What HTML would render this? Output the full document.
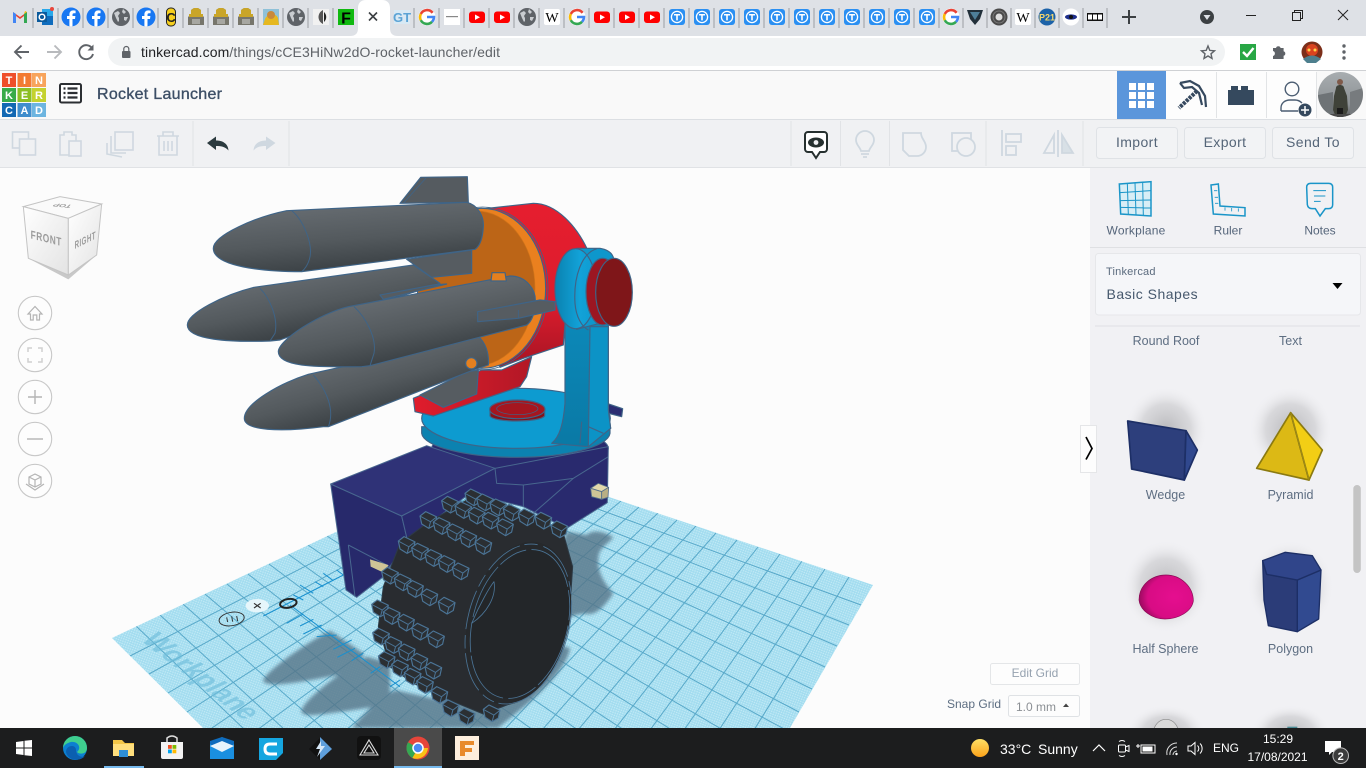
<!DOCTYPE html>
<html lang="en">
<head>
<meta charset="utf-8">
<title>Rocket Launcher</title>
<style>
html,body{margin:0;padding:0;width:1366px;height:768px;overflow:hidden;background:#fcfcfc}
svg{display:block;font-family:"Liberation Sans",Arial,sans-serif}
</style>
</head>
<body>
<svg xmlns="http://www.w3.org/2000/svg" width="1366" height="768" viewBox="0 0 1366 768">
<defs>
<filter id="soft" x="-10%" y="-10%" width="120%" height="120%"><feGaussianBlur stdDeviation="1.8"/></filter>
<pattern id="dots" width="2.4" height="2.4" patternUnits="userSpaceOnUse" patternTransform="rotate(20)"><rect width="2.4" height="2.4" fill="#a2dcef"/><circle cx="1.2" cy="1.2" r=".75" fill="#c4ebf7"/></pattern>
<clipPath id="wpclip"><polygon points="492,458 873,585 790,728 203,728 112,638"/></clipPath>
<linearGradient id="rk1" gradientUnits="userSpaceOnUse" x1="492" y1="110" x2="508" y2="290"><stop offset="0" stop-color="#646a6f"/><stop offset=".55" stop-color="#53595d"/><stop offset="1" stop-color="#3d4347"/></linearGradient>
<linearGradient id="rk2" gradientUnits="userSpaceOnUse" x1="384" y1="312" x2="416" y2="478"><stop offset="0" stop-color="#646a6f"/><stop offset=".55" stop-color="#53595d"/><stop offset="1" stop-color="#3d4347"/></linearGradient>
<linearGradient id="rk3" gradientUnits="userSpaceOnUse" x1="662" y1="382" x2="698" y2="558"><stop offset="0" stop-color="#646a6f"/><stop offset=".55" stop-color="#53595d"/><stop offset="1" stop-color="#3d4347"/></linearGradient>
<linearGradient id="rk4" gradientUnits="userSpaceOnUse" x1="536" y1="554" x2="584" y2="726"><stop offset="0" stop-color="#646a6f"/><stop offset=".55" stop-color="#53595d"/><stop offset="1" stop-color="#3d4347"/></linearGradient>
<linearGradient id="red" x1="0" y1="0" x2="0" y2="1"><stop offset="0" stop-color="#e61e2f"/><stop offset=".6" stop-color="#dc1c2d"/><stop offset="1" stop-color="#a71524"/></linearGradient>
<linearGradient id="redb" x1="0" y1="0" x2="1" y2="0"><stop offset="0" stop-color="#e01c2c"/><stop offset="1" stop-color="#b21826"/></linearGradient>
<linearGradient id="hub" x1="0" y1="0" x2="1" y2="0"><stop offset="0" stop-color="#0a82b0"/><stop offset=".6" stop-color="#12a2d8"/><stop offset="1" stop-color="#0e9ad0"/></linearGradient>
<linearGradient id="arm" x1="0" y1="0" x2="0" y2="1"><stop offset="0" stop-color="#0c88b8"/><stop offset="1" stop-color="#0a79a5"/></linearGradient>
<linearGradient id="cubeL" x1="0" y1="0" x2="1" y2="1"><stop offset="0" stop-color="#fff"/><stop offset="1" stop-color="#e3e3e3"/></linearGradient>
<radialGradient id="blurshadow"><stop offset="0" stop-color="#b2b2b5" stop-opacity=".9"/><stop offset=".6" stop-color="#c4c4c7" stop-opacity=".55"/><stop offset="1" stop-color="#f1f1f4" stop-opacity="0"/></radialGradient>
<radialGradient id="pink" cx=".65" cy=".5" r=".7"><stop offset="0" stop-color="#e50e8f"/><stop offset=".7" stop-color="#d80c84"/><stop offset="1" stop-color="#8a0a55"/></radialGradient>
<linearGradient id="sun" x1="0" y1="0" x2="0" y2="1"><stop offset="0" stop-color="#ffe066"/><stop offset="1" stop-color="#fba21a"/></linearGradient>
<linearGradient id="sky" x1="0" y1="0" x2="0" y2="1"><stop offset="0" stop-color="#a8adb0"/><stop offset=".7" stop-color="#8d9295"/><stop offset="1" stop-color="#585a5c"/></linearGradient>
<clipPath id="avclip"><circle cx="1340.5" cy="94.5" r="22.5"/></clipPath>
<clipPath id="fbclip"><circle cx="0" cy="0" r="9.5"/></clipPath>
<g id="fb"><circle r="9.5" fill="#1877f2"/><path clip-path="url(#fbclip)" fill="#fff" d="M1.5,10V2H4l.4-3H1.5V-2.2c0-.9.4-1.5,1.6-1.5H4.6V-6.4C4-6.5,3.2-6.6,2.4-6.6-.2-6.6-1.6-5-1.6-2.5V-1H-4V2h2.4v8Z"/></g>
<g id="globe"><circle r="9" fill="#5f6368"/><path fill="#c9ccd0" d="M-7,-4 L-3,-6 L-1,-4 L-3,-1 L-2,1 L-2,4 L-3,5 L-5,1 Z M2,-8 L5,-5 L3,-3 L1,-5 Z M3,0 L7,0 L5,4 L3,3 Z"/></g>
<g id="yt"><rect x="-8" y="-5.5" width="16" height="11.5" rx="3" fill="#f00"/><path d="M-2,-2.5 L3,.2 L-2,3Z" fill="#fff"/></g>
<g id="tt"><rect x="-8" y="-8" width="16" height="16" rx="3" fill="#2a8ff2"/><circle r="5.6" fill="none" stroke="#fff" stroke-width="1.3"/><path d="M-3,-3H3V-1.5H.8V3.4H-.8V-1.5H-3Z" fill="#fff"/></g>
<g id="gg"><circle r="8.5" fill="#fff"/><path d="M5.6,-4.2A7,7 0 0 0 -6.2,-3" fill="none" stroke="#ea4335" stroke-width="2.6"/><path d="M-6.2,-3A7,7 0 0 0 -6.2,3.2" fill="none" stroke="#fbbc05" stroke-width="2.6"/><path d="M-6.2,3.2A7,7 0 0 0 5,4.8" fill="none" stroke="#34a853" stroke-width="2.6"/><path d="M5,4.8A7,7 0 0 0 7,0H0" fill="none" stroke="#4285f4" stroke-width="2.6"/></g>
<g id="rob"><path d="M-8,8 V0 L-5,-3 V-7 L-2,-9 H2 L5,-7 V-3 L8,0 V8Z" fill="#77766c"/><path d="M-5,-3 V-7 L-2,-9 H2 L5,-7 V-3Z" fill="#c9a528"/><rect x="-7" y="-3" width="14" height="3" fill="#c9a528"/><rect x="-4" y="2" width="8" height="5" fill="#a7a7a1"/></g>
<g id="wk"><rect x="-8" y="-8" width="16" height="16" rx="2" fill="#fff"/><text x="0" y="5" font-family="'Liberation Serif',serif" font-size="14" text-anchor="middle" fill="#000">W</text></g>
<g id="lug" transform="scale(1.32)"><path d="M-19,-9 L-6,-19 L19,-7 L15,11 L1,19 L-15,9Z" fill="#2b2f33" stroke="#4b7496" stroke-width="2.6" stroke-linejoin="round"/><path d="M-19,-9 L5,4 L19,-7 M5,4 L1,19" fill="none" stroke="#4b7496" stroke-width="2.2"/></g>
</defs>

<!-- backgrounds -->
<rect width="1366" height="768" fill="#fcfcfc"/>
<rect width="1366" height="36" fill="#dee1e6"/>
<rect y="36" width="1366" height="34" fill="#fff"/>
<rect y="70" width="1366" height="1" fill="#cfd1d4"/>
<rect y="71" width="1366" height="48" fill="#f9f9f9"/>
<rect y="119" width="1366" height="1.5" fill="#dcdfe3"/>
<rect y="120" width="1366" height="47" fill="#f0f1f3"/>
<rect y="167" width="1366" height="1" fill="#e0e2e5"/>

<!-- active tab -->
<path d="M350,36 C356,36 358,33 358,28 V8 C358,3 361,0 366,0 H382 C387,0 390,3 390,8 V28 C390,33 392,36 398,36Z" fill="#fff"/>
<path d="M369,12.5 L377,20.5 M377,12.5 L369,20.5" stroke="#3c4043" stroke-width="1.6"/>

<!-- tab separators -->
<g stroke="#9a9da1" stroke-width="1">
<path d="M33,8V28M58,8V28M83,8V28M108,8V28M133,8V28M158,8V28M183,8V28M208,8V28M233,8V28M258,8V28M283,8V28M308,8V28M333,8V28M414,8V28M439,8V28M464,8V28M489,8V28M514,8V28M539,8V28M564,8V28M589,8V28M614,8V28M639,8V28M664,8V28M689,8V28M714,8V28M739,8V28M764,8V28M789,8V28M814,8V28M839,8V28M864,8V28M889,8V28M914,8V28M939,8V28M963,8V28M987,8V28M1011,8V28M1035,8V28M1059,8V28M1083,8V28M1107,8V28"/>
</g>

<!-- favicons -->
<g>
<g transform="translate(20,17)"><path d="M-7,6V-5L0,0L7,-5V6H4V-1L0,2L-4,-1V6Z" fill="#ea4335"/><path d="M-7,6V-5L-4,-3V6Z" fill="#4285f4"/><path d="M7,6V-5L4,-3V6Z" fill="#34a853"/><path d="M4,-3L7,-5L5,-6Z" fill="#fbbc05"/></g>
<g transform="translate(45,17)"><rect x="-3" y="-8" width="11" height="16" fill="#28a8ea"/><rect x="-3" y="-1" width="11" height="9" fill="#0f6cbd"/><rect x="-8" y="-5" width="10" height="10" fill="#0a5a9c"/><circle cx="-3" cy="0" r="2.8" fill="none" stroke="#fff" stroke-width="1.5"/><circle cx="7" cy="-8" r="2" fill="#e8463c"/></g>
<use href="#fb" x="71" y="17"/><use href="#fb" x="96" y="17"/>
<use href="#globe" x="121" y="17"/><use href="#fb" x="146" y="17"/>
<g transform="translate(171,17)"><rect x="-4.5" y="-9" width="9" height="18" rx="4" fill="#f6cf1d" stroke="#222" stroke-width="1"/><text x="0" y="5" font-size="13" font-weight="bold" text-anchor="middle" fill="#222">C</text></g>
<use href="#rob" x="196" y="17"/><use href="#rob" x="221" y="17"/><use href="#rob" x="246" y="17"/>
<g transform="translate(271,17)"><rect x="-8" y="-8" width="16" height="16" fill="#8fc1d8"/><path d="M-8,8 L-6,2 C-4,-3 4,-5 7,1 L8,8Z" fill="#e6b820"/><circle cx="0" cy="-2" r="4" fill="#c98a3c"/></g>
<use href="#globe" x="296" y="17"/>
<g transform="translate(321,17)"><rect x="-8" y="-8" width="16" height="16" fill="#f1f1f1"/><path d="M2,-7 C-4,-4 -4,4 2,7 Z" fill="#555"/><path d="M3,-5 C6,-2 6,2 3,5Z" fill="#222"/></g>
<g transform="translate(346,17)"><rect x="-8" y="-8" width="16" height="16" fill="#10b910"/><text x="0" y="6.5" font-size="16" font-weight="bold" text-anchor="middle" fill="#000">F</text></g>
<g transform="translate(402,17)"><rect x="-8" y="-7" width="16" height="14" fill="#d8e9f4"/><text x="0" y="5" font-size="13" font-weight="bold" text-anchor="middle" fill="#5ba3d5">GT</text></g>
<use href="#gg" x="427" y="17"/>
<g transform="translate(452,17)"><rect x="-8" y="-8" width="16" height="16" fill="#fff"/><rect x="-6" y="-1" width="12" height="1.2" fill="#888"/></g>
<use href="#yt" x="477" y="17"/><use href="#yt" x="502" y="17"/>
<use href="#globe" x="527" y="17"/><use href="#wk" x="552" y="17"/>
<use href="#gg" x="577" y="17"/><use href="#yt" x="602" y="17"/><use href="#yt" x="627" y="17"/><use href="#yt" x="652" y="17"/>
<use href="#tt" x="677" y="17"/><use href="#tt" x="702" y="17"/><use href="#tt" x="727" y="17"/><use href="#tt" x="752" y="17"/><use href="#tt" x="777" y="17"/><use href="#tt" x="802" y="17"/><use href="#tt" x="827" y="17"/><use href="#tt" x="852" y="17"/><use href="#tt" x="877" y="17"/><use href="#tt" x="902" y="17"/><use href="#tt" x="927" y="17"/>
<use href="#gg" x="951" y="17"/>
<g transform="translate(975,17)"><path d="M-8,-7 H8 L5,2 L0,8 L-5,2Z" fill="#22303a"/><path d="M-5,-5 H5 L0,3Z" fill="#4e7f99"/></g>
<g transform="translate(999,17)"><circle r="8.5" fill="#4a4a4a"/><circle r="3.5" fill="#ddd"/><circle r="6" fill="none" stroke="#777" stroke-width="1"/></g>
<use href="#wk" x="1023" y="17"/>
<g transform="translate(1047,17)"><circle r="8.5" fill="#1c62a8"/><text x="0" y="3.5" font-size="9" font-weight="bold" text-anchor="middle" fill="#f5d66b">P21</text></g>
<g transform="translate(1071,17)"><circle r="8.5" fill="#fff"/><ellipse rx="6" ry="2.6" fill="#1e2f8c"/><circle r="2" fill="#111"/></g>
<g transform="translate(1095,17)"><rect x="-8" y="-4" width="16" height="8" fill="#111"/><rect x="-7" y="-2.5" width="4" height="5" fill="#fff"/><rect x="-2" y="-2.5" width="4" height="5" fill="#fff"/><rect x="3" y="-2.5" width="4" height="5" fill="#fff"/></g>
</g>

<!-- window controls -->
<path d="M1122,17 H1136 M1129,10 V24" stroke="#3c4043" stroke-width="2"/>
<circle cx="1207" cy="17" r="7" fill="#3c4043"/><path d="M1203.5,15 H1210.5 L1207,20Z" fill="#dee1e6"/>
<path d="M1246,15.5 H1256" stroke="#222" stroke-width="1"/>
<path d="M1292.5,12.5 h8 v8 h-8Z M1294.5,12.5 v-2 h8 v8 h-2" fill="none" stroke="#222" stroke-width="1"/>
<path d="M1338,10 L1348,20 M1348,10 L1338,20" stroke="#222" stroke-width="1"/>

<!-- nav bar -->
<path d="M29,52 H15 M21.5,45.5 L15,52 L21.5,58.5" fill="none" stroke="#5f6368" stroke-width="1.9"/>
<path d="M47,52 H61 M54.5,45.5 L61,52 L54.5,58.5" fill="none" stroke="#b8babd" stroke-width="1.9"/>
<path d="M92.5,49 A7,7 0 1 0 93,54" fill="none" stroke="#5f6368" stroke-width="1.9"/><path d="M93.5,44.5 V50.5 H87.5Z" fill="#5f6368"/>
<rect x="108" y="38" width="1117" height="28" rx="14" fill="#f1f3f4"/>
<rect x="122" y="51" width="8.5" height="7" rx="1" fill="#5f6368"/><path d="M123.8,51 V49 a2.5,2.5 0 0 1 5,0 V51" fill="none" stroke="#5f6368" stroke-width="1.2"/>
<text x="141" y="57" font-size="14" fill="#5f6368" textLength="359"><tspan fill="#202124">tinkercad.com</tspan>/things/cCE3HiNw2dO-rocket-launcher/edit</text>
<path d="M1208,46 L1209.8,50.4 L1214.5,50.8 L1211,53.8 L1212,58.4 L1208,56 L1204,58.4 L1205,53.8 L1201.5,50.8 L1206.2,50.4Z" fill="none" stroke="#5f6368" stroke-width="1.4"/>
<rect x="1240" y="44" width="16" height="16" fill="#28a745"/><path d="M1243,52 L1247,56 L1253.5,48" fill="none" stroke="#fff" stroke-width="2.4"/>
<path d="M1273,48 h3 a2.4,2.4 0 0 1 4.6,0 h3 v3.2 a2.4,2.4 0 0 1 0,4.6 v3.2 h-10.6 v-3 a2.6,2.6 0 0 0 0,-5Z" fill="#5f6368"/>
<circle cx="1312" cy="52" r="10.5" fill="#7c2f1a"/><circle cx="1312" cy="50" r="6" fill="#d9431f"/><circle cx="1309" cy="50" r="1.5" fill="#ffd24a"/><circle cx="1315" cy="50" r="1.5" fill="#ffd24a"/><path d="M1303,59 Q1312,52 1321,59 L1316,63 H1307Z" fill="#4d7f8e"/>
<circle cx="1344" cy="46" r="1.7" fill="#5f6368"/><circle cx="1344" cy="52" r="1.7" fill="#5f6368"/><circle cx="1344" cy="58" r="1.7" fill="#5f6368"/>

<!-- Tinkercad logo -->
<g font-size="11" font-weight="bold" fill="#fff" text-anchor="middle">
<rect x="2" y="73" width="14" height="14" fill="#ef4f2b"/><text x="9" y="84">T</text>
<rect x="17.5" y="73" width="14" height="14" fill="#f37b33"/><text x="24.5" y="84">I</text>
<rect x="32" y="73" width="14" height="14" fill="#f8a45c"/><text x="39" y="84">N</text>
<rect x="2" y="88" width="14" height="14" fill="#39ab4a"/><text x="9" y="99">K</text>
<rect x="17.5" y="88" width="14" height="14" fill="#8dbf24"/><text x="24.5" y="99">E</text>
<rect x="32" y="88" width="14" height="14" fill="#c4d230"/><text x="39" y="99">R</text>
<rect x="2" y="103" width="14" height="14" fill="#1268b3"/><text x="9" y="114">C</text>
<rect x="17.5" y="103" width="14" height="14" fill="#3f8dcc"/><text x="24.5" y="114">A</text>
<rect x="32" y="103" width="14" height="14" fill="#6db5e0"/><text x="39" y="114">D</text>
</g>
<rect x="60" y="84" width="21" height="18.5" rx="1.5" fill="#fff" stroke="#2c2f33" stroke-width="2"/>
<path d="M63.5,88.5h2M63.5,93h2M63.5,97.5h2M67.5,88.5h10M67.5,93h10M67.5,97.5h10" stroke="#2c2f33" stroke-width="2.2"/>
<text x="97" y="99" font-size="16" fill="#3d4f66" stroke="#3d4f66" stroke-width=".35" textLength="125">Rocket Launcher</text>

<!-- header right -->
<rect x="1117" y="71" width="49" height="48" fill="#5b96db"/>
<g fill="#fff"><rect x="1129" y="83" width="7" height="7"/><rect x="1138" y="83" width="7" height="7"/><rect x="1147" y="83" width="7" height="7"/><rect x="1129" y="92" width="7" height="7"/><rect x="1138" y="92" width="7" height="7"/><rect x="1147" y="92" width="7" height="7"/><rect x="1129" y="101" width="7" height="7"/><rect x="1138" y="101" width="7" height="7"/><rect x="1147" y="101" width="7" height="7"/></g>
<rect x="1166" y="71" width="150" height="48" fill="#fdfdfd"/>
<path d="M1216.5,72V118M1266.5,72V118M1316.5,72V118" stroke="#e2e4e6" stroke-width="1"/>
<path d="M1180,83 L1190,81 L1199,86 L1205,96 L1206,107 M1180,83 L1184,88 L1192,87 L1199,93 L1202,105" fill="none" stroke="#36495f" stroke-width="2.2"/>
<path d="M1197,91 L1179,108" stroke="#36495f" stroke-width="4" stroke-dasharray="3 1"/>
<path d="M1228,90 h3 v-4 h7 v4 h3 v-4 h7 v4 h6 v15 h-26Z" fill="#35495e"/>
<circle cx="1292" cy="89" r="6.8" fill="none" stroke="#4b5d72" stroke-width="1.4"/>
<path d="M1281,111 V108 C1281,103 1285,100 1290,100 H1295 C1298,100 1300,101 1302,103 M1281,111 H1298" fill="none" stroke="#4b5d72" stroke-width="1.4"/>
<circle cx="1305" cy="110" r="6.5" fill="#35495e"/><path d="M1301,110 H1309 M1305,106 V114" stroke="#fff" stroke-width="1.5"/>
<g clip-path="url(#avclip)"><rect x="1318" y="72" width="46" height="46" fill="url(#sky)"/><path d="M1318,95 L1333,92 V117 H1318Z" fill="#6e7376"/><path d="M1350,92 L1363,88 V117 H1350Z" fill="#777b7e"/><path d="M1336,88 C1336,84 1344,84 1344,88 L1347,96 L1348,110 L1345,117 H1336 L1333,110 L1334,96Z" fill="#3f4239"/><circle cx="1340" cy="82" r="3" fill="#7f5a4a"/><rect x="1337" y="108" width="6" height="9" fill="#1b1b1b"/><rect x="1318" y="114" width="46" height="4" fill="#4a4a4a"/></g>

<!-- toolbar left -->
<g fill="none" stroke="#cfd8e0" stroke-width="1.6">
<rect x="12.5" y="132" width="16" height="16"/><rect x="19.5" y="139" width="16" height="16" fill="#f0f1f3"/>
<path d="M60,135 H64 V132 H72 V135 H76 V155 H60Z"/><rect x="69" y="141" width="12" height="15" fill="#f0f1f3"/>
<rect x="115" y="132" width="18" height="18"/><path d="M111,136 V153 H126 M107,143 V154 L122,157" />
<path d="M157,136 H179 M163,136 V132 H173 V136 M159,136 V155 H177 V136 M164,141 V151 M168,141 V151 M172,141 V151"/>
</g>
<path d="M193,121V166M289,121V166M791,121V166M840.5,121V166M889.5,121V166M986,121V166M1083,121V166" stroke="#e1e3e6" stroke-width="1"/>
<path d="M207,143 L216,136.5 V140.5 C222,140.5 228,143 228.5,150.5 C225,146.5 221,146 216,146 V150Z" fill="#2b3a3e"/>
<path d="M275.5,143 L266,136.5 V140.5 C260,140.5 254,143 253.5,150.5 C257,146.5 261,146 266,146 V150Z" fill="#cfd8e0"/>

<!-- toolbar right -->
<path d="M808,132 H824 a3,3 0 0 1 3,3 V149 a3,3 0 0 1 -3,3 H820 L816,158 L812,152 H808 a3,3 0 0 1 -3,-3 V135 a3,3 0 0 1 3,-3Z" fill="#fff" stroke="#26302f" stroke-width="2"/>
<ellipse cx="816" cy="142.5" rx="8" ry="5" fill="#26302f"/><circle cx="816" cy="142.5" r="2.4" fill="#f0f1f3"/>
<g fill="none" stroke="#cfd8e0" stroke-width="1.8">
<path d="M861,151 C860,147 856,145 856,140 A9,9 0 0 1 874,140 C874,145 870,147 869,151Z"/><path d="M861,154H869M863,157H867"/>
<path d="M903,133 H921 C921,139 926,141 926,147 A9,9 0 0 1 917,156 H909 L903,150Z"/>
<rect x="952" y="133" width="19" height="18"/><circle cx="966" cy="147" r="9" fill="#f0f1f3"/>
<path d="M1002,130V156"/><rect x="1006" y="134" width="15" height="8"/><rect x="1006" y="146" width="10" height="9"/>
<path d="M1058,130V157"/><path d="M1054,135 L1044,153 H1054Z"/><path d="M1062,135 L1073,153 H1062Z" fill="#d8e0e6"/>
</g>
<g fill="#f2f3f5" stroke="#dfe2e6" stroke-width="1">
<rect x="1096.5" y="127.5" width="81" height="31" rx="3"/><rect x="1184.5" y="127.5" width="81" height="31" rx="3"/><rect x="1272.5" y="127.5" width="81" height="31" rx="3"/>
</g>
<g font-size="14" fill="#556578" text-anchor="middle" letter-spacing=".4">
<text x="1137" y="147">Import</text><text x="1225" y="147">Export</text><text x="1313" y="147">Send To</text>
</g>

<!-- workplane -->
<polygon points="492,458 873,585 790,728 203,728 112,638" fill="url(#dots)"/>
<g clip-path="url(#wpclip)">
<g stroke="#4a9fc2" stroke-width="1" opacity=".85">
<path d="M477,465L861,605M462,472L849,625M446,480L837,646M431,487L825,667M414,495L812,689M398,503L799,712M381,511L786,730M363,519L723,730M345,527L672,730M327,536L624,730M308,545L578,730M288,554L533,730M269,564L490,730M248,574L447,730M227,584L406,730M205,594L364,730M183,604L325,730M160,615L285,730M136,626L245,730"/>
<path d="M507,463L130,656M522,468L149,674M538,473L168,693M553,478L187,712M570,484L209,730M586,489L257,730M604,495L302,730M621,501L346,730M639,507L387,730M658,513L428,730M677,520L468,730M696,526L504,730M716,533L542,730M737,540L578,730M758,547L614,730M780,554L650,730M802,561L684,730M825,569L719,730M849,577L754,730"/>
</g>
<text transform="matrix(.79 .61 -1.05 .5 140 640)" font-size="26" font-weight="bold" fill="#6fbedb" opacity=".65">Workplane</text>
<!-- shadows -->
<g fill="#567488" opacity=".8" filter="url(#soft)">
<g transform="translate(100,540) scale(.33333)">
<path d="M490,420 C500,395 600,320 690,272 L790,340 L775,395 C700,405 560,440 510,432 C498,430 488,428 490,420Z"/>
<path d="M605,510 C615,480 700,410 800,350 L870,370 L870,495 C780,505 660,528 625,525 C610,524 602,518 605,510Z"/>
</g>
<path d="M352,728 C365,712 380,698 395,690 L440,700 L540,640 L570,648 C568,665 545,690 520,710 L498,728Z"/>
<g transform="translate(560,480) scale(.33333)">
<path d="M20,155 L80,165 C95,150 125,150 160,172 C140,195 115,205 115,235 C112,270 125,300 160,340 C140,370 115,400 90,402 C70,400 40,400 0,430 L-30,300Z"/>
</g>
</g>
<!-- ruler -->
<g transform="translate(100,540) scale(.33333)" stroke="#1890cf" stroke-width="3" fill="none">
<path d="M490,228 L730,105"/><path d="M570,195 L900,440"/>
<path d="M600,135L640,160M645,125L670,140M670,100L700,122M710,90L730,105M580,165L610,180"/>
<path d="M560,250L610,222M600,258L640,238M610,282L665,255M650,290L710,285M700,328L755,300M712,352L765,325M755,362L790,340M812,400L840,380M870,440L900,420"/>
</g>
<g transform="translate(100,540) scale(.33333)">
<ellipse cx="395" cy="237" rx="38" ry="20" transform="rotate(-10 395 237)" fill="none" stroke="#333" stroke-width="3"/>
<path d="M380,232L383,246M395,229L398,245M410,228L413,243" stroke="#333" stroke-width="3"/>
<ellipse cx="472" cy="197" rx="35" ry="20" fill="#e6f6fb"/>
<path d="M462,190L482,204M482,190L462,204" stroke="#333" stroke-width="3.5"/>
<ellipse cx="565" cy="190" rx="25" ry="13" transform="rotate(-10 565 190)" fill="none" stroke="#222" stroke-width="6"/>
</g>
</g>

<!-- base & wheel -->
<g transform="translate(320,400) scale(.33333)" stroke-linejoin="round">
<ellipse cx="600" cy="145" rx="265" ry="65" fill="#292a6e" stroke="#48678f" stroke-width="3"/>
<path d="M32,252 L245,348 L262,420 L190,530 L110,592 L78,570Z" fill="#27296b" stroke="#48678f" stroke-width="3"/>
<path d="M32,252 L320,137 L525,205 L245,348Z" fill="#2f3277" stroke="#48678f" stroke-width="3"/>
<path d="M245,348 L525,205 L865,140 L862,308 L740,385 L610,320 L450,280 L262,420Z" fill="#292a6e" stroke="#48678f" stroke-width="3"/>
<path d="M85,435 L105,590 M85,435 L210,500 M525,205 L530,250 L610,255 L760,235 L865,170 M610,255 L610,320 M760,235 L640,340" fill="none" stroke="#48678f" stroke-width="3"/>
<path d="M150,478 L205,495 L195,520 L152,500Z" fill="#cfc596"/>
<path d="M812,265 L835,250 L866,262 L845,275Z" fill="#e2d8ab" stroke="#56708a" stroke-width="2.5"/>
<path d="M812,265 L845,275 L845,298 L815,290Z" fill="#cfc596" stroke="#56708a" stroke-width="2.5"/>
<path d="M845,275 L866,262 L864,292 L845,298Z" fill="#b9af84" stroke="#56708a" stroke-width="2.5"/>
<path d="M240,430 L320,370 L440,300 L620,340 L730,400 L758,500 L750,620 L700,780 L600,900 L490,942 L400,905 L280,850 L210,800 L175,680 L190,560Z" fill="#292c30" stroke="#2d3a45" stroke-width="3"/>
<ellipse cx="595" cy="670" rx="150" ry="250" transform="rotate(15 595 670)" fill="#26292c"/>
<ellipse cx="595" cy="672" rx="152" ry="245" transform="rotate(15 595 672)" fill="none" stroke="#4b7496" stroke-width="2.5" stroke-dasharray="120 14 40 18"/>
<ellipse cx="600" cy="672" rx="142" ry="228" transform="rotate(15 600 672)" fill="#232629" stroke="#4b7496" stroke-width="2.5" stroke-dasharray="170 10 90 16"/>
<path d="M455,670 C480,610 510,560 522,545 C530,590 500,640 455,670Z" fill="none" stroke="#4b7496" stroke-width="2.5"/>
<g>
<use href="#lug" x="460" y="292"/><use href="#lug" x="495" y="307"/><use href="#lug" x="535" y="322"/><use href="#lug" x="575" y="338"/><use href="#lug" x="620" y="352"/><use href="#lug" x="670" y="362"/><use href="#lug" x="718" y="388"/>
<use href="#lug" x="390" y="314"/><use href="#lug" x="430" y="330"/><use href="#lug" x="470" y="347"/><use href="#lug" x="512" y="362"/><use href="#lug" x="555" y="382"/>
<use href="#lug" x="325" y="360"/><use href="#lug" x="365" y="378"/><use href="#lug" x="405" y="397"/><use href="#lug" x="445" y="417"/><use href="#lug" x="490" y="438"/>
<use href="#lug" x="260" y="435"/><use href="#lug" x="300" y="455"/><use href="#lug" x="340" y="474"/><use href="#lug" x="380" y="492"/><use href="#lug" x="422" y="514"/>
<use href="#lug" x="210" y="527"/><use href="#lug" x="248" y="547"/><use href="#lug" x="285" y="567"/><use href="#lug" x="328" y="592"/><use href="#lug" x="380" y="617"/>
<use href="#lug" x="180" y="625"/><use href="#lug" x="215" y="648"/><use href="#lug" x="258" y="668"/><use href="#lug" x="300" y="695"/><use href="#lug" x="348" y="718"/>
<use href="#lug" x="183" y="710"/><use href="#lug" x="220" y="735"/><use href="#lug" x="260" y="757"/><use href="#lug" x="298" y="785"/><use href="#lug" x="340" y="812"/>
<use href="#lug" x="200" y="780"/><use href="#lug" x="240" y="805"/><use href="#lug" x="278" y="830"/><use href="#lug" x="315" y="855"/><use href="#lug" x="358" y="885"/>
<use href="#lug" x="392" y="925"/><use href="#lug" x="440" y="950"/><use href="#lug" x="515" y="940"/>
</g>
</g>

<!-- launcher -->
<g transform="translate(180,170) scale(.33333)" stroke="#3f6487" stroke-width="3.5" stroke-linejoin="round">
<!-- navy tab behind disc -->
<path d="M1280,700 L1328,716 L1325,740 L1285,730Z" fill="#2b2d72"/>
<!-- blue disc -->
<path d="M725,770 V790 C730,830 860,862 1010,862 C1160,862 1285,830 1290,790 V770Z" fill="#0c82b0"/>
<ellipse cx="1008" cy="745" rx="283" ry="90" fill="#0d9bd0"/>
<!-- small red disc -->
<path d="M930,718 V738 C940,758 1080,758 1094,738 V718Z" fill="#861219"/>
<ellipse cx="1012" cy="718" rx="83" ry="28" fill="#a5161f"/>
<ellipse cx="1012" cy="716" rx="62" ry="18" fill="none" stroke-width="2"/>
<!-- red cylinder -->
<path d="M895,118 L1060,100 C1130,100 1190,170 1222,238 L1160,400 L1150,525 L1030,565 L960,592 L900,400Z" fill="url(#red)"/>
<!-- arm -->
<path d="M1155,460 L1285,460 L1285,720 L1292,775 L1225,830 L1115,820 C1140,800 1150,760 1155,700Z" fill="url(#arm)"/>
<path d="M1230,470 L1285,470 L1285,720 L1292,775 L1225,830Z" fill="#0c93c6"/>
<path d="M1205,755 L1200,820 M1225,770 L1270,790" fill="none"/>
<!-- orange -->
<ellipse cx="905" cy="355" rx="192" ry="240" fill="#ea801f"/>
<ellipse cx="908" cy="355" rx="196" ry="244" fill="none" stroke-width="2.5"/>
<ellipse cx="890" cy="355" rx="175" ry="232" fill="#bc6517" stroke="#d07419" stroke-width="2"/>
<!-- red bracket -->
<path d="M700,685 L905,600 L965,600 L1055,560 L1040,620 L1020,650 L760,738 L705,725Z" fill="url(#redb)"/>
<!-- hub -->
<path d="M1190,235 L1260,235 C1290,240 1300,255 1302,270 L1260,460 L1190,478Z" fill="#0e97cc"/>
<ellipse cx="1187" cy="356" rx="62" ry="120" fill="url(#hub)"/>
<path d="M1250,236 C1205,250 1180,320 1185,400 C1188,440 1205,470 1225,480" fill="none"/>
<ellipse cx="1268" cy="365" rx="50" ry="100" fill="#9c1622"/>
<ellipse cx="1302" cy="367" rx="55" ry="102" fill="#7f1619"/>
<!-- rocket 1 fins -->
<polygon points="660,100 722,22 862,20 865,97" fill="#555b60"/>
<path d="M670,100L738,24" fill="none" stroke-width="2.5"/>
<polygon points="680,268 755,322 875,310 875,240" fill="#565c61"/>
<!-- rocket 1 -->
<path d="M320,122 L860,97 C895,105 912,140 910,170 C908,205 900,228 885,238 L365,305 C250,305 100,290 100,235 C100,195 230,140 320,122Z" fill="url(#rk1)"/>
<path d="M335,122 C370,150 398,220 390,260 C385,285 372,300 365,305" fill="none" stroke-width="3"/>
<!-- rocket 2 -->
<path d="M222,352 L700,285 L780,340 L600,400 L300,510 L270,513 C150,517 22,510 22,465 C22,430 130,375 222,352Z" fill="url(#rk2)"/>
<path d="M240,355 C270,385 295,445 285,490 L270,513" fill="none" stroke-width="3"/>
<polygon points="600,375 760,345 800,342 610,388" fill="#565c61"/>
<!-- rocket 4 fin -->
<polygon points="720,675 790,712 890,672 895,600 860,605" fill="#565c61"/>
<!-- rocket 4 -->
<path d="M385,613 L895,500 C915,515 928,550 925,585 L880,600 L445,770 L430,770 C300,787 193,782 193,745 C193,700 300,640 385,613Z" fill="url(#rk4)"/>
<path d="M400,615 C440,660 465,720 445,770" fill="none" stroke-width="3"/>
<circle cx="874" cy="580" r="17" fill="#e5801f"/>
<!-- rocket 3 -->
<path d="M505,410 L990,318 C1040,318 1068,360 1066,395 C1064,430 1055,455 1040,465 L570,587 L545,590 C400,592 295,590 295,545 C295,510 420,430 505,410Z" fill="url(#rk3)"/>
<path d="M522,410 C560,445 590,505 582,550 L570,587" fill="none" stroke-width="3"/>
<polygon points="893,425 1080,390 1125,395 1125,420 1015,445 893,455" fill="#565c61"/>
<path d="M1015,420 L1015,445" fill="none" stroke-width="2.5"/>
<path d="M936,308 H975 L979,333 H933Z" fill="#e5801f"/>
</g>

<!-- viewcube -->
<g transform="translate(0,170) scale(.33333)">
<path d="M85,265 L205,328 L290,255 L280,245 L205,300Z" fill="#c8c8c8"/>
<path d="M70,110 L180,80 L305,102 L205,145Z" fill="#fafafa" stroke="#c4c4c4" stroke-width="3"/>
<path d="M70,110 L205,145 L205,315 L85,265Z" fill="url(#cubeL)" stroke="#c4c4c4" stroke-width="3"/>
<path d="M205,145 L305,102 L290,255 L205,315Z" fill="url(#cubeL)" stroke="#c4c4c4" stroke-width="3"/>
<text transform="matrix(1 .25 0 1.4 92 205)" font-size="25" font-weight="bold" fill="#9b9b9b" textLength="92">FRONT</text>
<text transform="matrix(.8 -.4 0 1.4 224 237)" font-size="23" font-weight="bold" fill="#9b9b9b" textLength="78">RIGHT</text>
<text transform="matrix(-1 -.1 .5 -.5 218 105)" font-size="26" font-weight="bold" fill="#9b9b9b">TOP</text>
</g>

<!-- view controls -->
<g fill="#fdfdfd" stroke="#c8c8c8" stroke-width="1.1">
<circle cx="35" cy="313" r="16.7"/><circle cx="35" cy="355" r="16.7"/><circle cx="35" cy="397" r="16.7"/><circle cx="35" cy="439" r="16.7"/><circle cx="35" cy="481" r="16.7"/>
</g>
<g fill="none" stroke="#b4b4b4" stroke-width="1.2">
<path d="M28,314 L35,306.5 L42,314 H39.5 V320 H36.8 V315 H33.2 V320 H30.5 V314Z"/>
<path d="M28,352 V348 H32 M38,348 H42 V352 M42,358 V362 H38 M32,362 H28 V358" stroke="#d0d0d0" stroke-width="1.5"/>
<path d="M28,397 H42 M35,390 V404" stroke-width="1.4"/>
<path d="M27,439 H43" stroke-width="1.4"/>
<path d="M29,477 L35,474 L41,477 V484 L35,487 L29,484Z M29,477 L35,480 L41,477 M35,480 V487 M26,484 L35,490 L44,484"/>
</g>

<!-- Edit grid -->
<rect x="990.5" y="663.5" width="89" height="21" rx="2" fill="#fdfdfd" stroke="#e4e6e8"/>
<text x="1035" y="677" font-size="12" fill="#96a2b0" text-anchor="middle">Edit Grid</text>
<text x="947" y="708" font-size="12" fill="#5d6e82">Snap Grid</text>
<rect x="1008.5" y="695.5" width="71" height="21" rx="2" fill="#fdfdfd" stroke="#dfe2e5"/>
<text x="1016" y="711" font-size="12" fill="#8b8f94">1.0 mm</text>
<path d="M1063,707 L1066,703.5 L1069,707Z" fill="#444"/>

<!-- right panel -->
<rect x="1090" y="168" width="276" height="560" fill="#f1f1f4"/>
<rect x="1080.5" y="425.5" width="16" height="47" fill="#fdfdfd" stroke="#e5e6e8"/>
<path d="M1086,437 L1092,448.5 L1086,459.5" fill="none" stroke="#000" stroke-width="1.7"/>

<g transform="translate(1080,170) scale(.33333)" fill="none" stroke="#1a95c8" stroke-width="4.5">
<path d="M118,42 L213,35 V138 L122,132Z" fill="#d8eef6"/>
<path d="M120,68 L213,62 M121,92 L213,90 M122,112 L213,114 M142,40 L145,134 M165,38 L168,135 M188,36 L190,137" stroke-width="3"/>
<path d="M393,45 L415,42 L420,108 L495,113 V138 L400,132Z"/>
<path d="M402,62h10M404,82h10M405,100h10M435,112v10M455,114v10M475,115v10" stroke-width="2.5"/>
<path d="M692,40 H746 Q758,40 758,52 V104 Q758,116 746,116 H736 L720,138 L706,116 H696 Q684,116 682,104 L680,52 Q680,40 692,40Z"/>
<path d="M700,62H738M702,78H736M702,94H722" stroke-width="3"/>
</g>
<g font-size="12" fill="#55657a" text-anchor="middle">
<text x="1136" y="234.5" letter-spacing=".2">Workplane</text><text x="1228" y="234.5">Ruler</text><text x="1320" y="234.5">Notes</text>
</g>
<rect x="1090" y="247" width="276" height="1" fill="#dfe0e3"/>
<rect x="1095.5" y="253.5" width="265" height="61.5" rx="3" fill="#f5f6f9" stroke="#e6e7ea"/>
<text x="1106" y="275" font-size="11" fill="#5b6b7e" letter-spacing=".2">Tinkercad</text>
<text x="1106.5" y="299" font-size="14" fill="#46586d" letter-spacing=".5">Basic Shapes</text>
<path d="M1332.5,283 H1342.5 L1337.5,289Z" fill="#000"/>
<rect x="1095" y="325.5" width="265" height="1" fill="#dfe0e3"/>
<g font-size="12.5" fill="#5e6e82" text-anchor="middle">
<text x="1166" y="345">Round Roof</text><text x="1290.5" y="345">Text</text>
<text x="1165.5" y="499">Wedge</text><text x="1290.5" y="499">Pyramid</text>
<text x="1165.5" y="653">Half Sphere</text><text x="1290.5" y="653">Polygon</text>
</g>
<rect x="1353.3" y="485" width="7.5" height="88" rx="3.7" fill="#c4c4c4"/>

<!-- shape thumbnails -->
<g transform="translate(1080,400) scale(.33333)" stroke-linejoin="round">
<ellipse cx="258" cy="90" rx="125" ry="130" fill="url(#blurshadow)"/>
<ellipse cx="632" cy="90" rx="125" ry="130" fill="url(#blurshadow)"/>
<ellipse cx="258" cy="560" rx="130" ry="140" fill="url(#blurshadow)"/>
<ellipse cx="632" cy="560" rx="130" ry="140" fill="url(#blurshadow)"/>
<ellipse cx="258" cy="1000" rx="120" ry="85" fill="url(#blurshadow)"/>
<ellipse cx="632" cy="1000" rx="120" ry="85" fill="url(#blurshadow)"/>
<polygon points="143,63 318,92 313,240 155,207" fill="#2d3f7c" stroke="#1d2f66" stroke-width="5"/>
<polygon points="318,92 352,150 313,240" fill="#30488e" stroke="#1d2f66" stroke-width="5"/>
<polygon points="632,38 687,240 530,205" fill="#dcb915" stroke="#8b7a10" stroke-width="5"/>
<polygon points="632,38 727,150 687,240" fill="#f2ce15" stroke="#8b7a10" stroke-width="5"/>
<path d="M632,38 L687,240" stroke="#a8921a" stroke-width="2"/>
<path d="M177,600 C177,555 215,525 258,525 C302,525 340,560 340,603 C335,635 295,657 255,657 C215,657 180,630 177,600Z" fill="url(#pink)" stroke="#8a0a55" stroke-width="2"/>
<polygon points="548,482 560,523 652,540 652,695 565,677 552,600" fill="#2b3c78" stroke="#1d2f66" stroke-width="4"/>
<polygon points="723,510 652,540 652,695 716,657" fill="#314a90" stroke="#1d2f66" stroke-width="4"/>
<polygon points="548,482 615,457 697,467 723,510 652,540 560,523" fill="#30458a" stroke="#1d2f66" stroke-width="4"/>
<ellipse cx="258" cy="1000" rx="38" ry="42" fill="#d9d9d9" stroke="#888" stroke-width="2"/>
<rect x="622" y="980" width="30" height="12" fill="#4a8a94"/>
</g>

<!-- taskbar -->
<rect y="728" width="1366" height="40" fill="#1c1d1e"/>
<rect x="394" y="728" width="48" height="40" fill="#4a4a4a"/>
<rect x="104" y="766" width="40" height="2" fill="#76b9ed"/>
<rect x="394" y="766" width="48" height="2" fill="#76b9ed"/>
<path d="M16,742 L23.5,741 V747.5 H16Z M24.5,740.8 L32,740 V747.5 H24.5Z M16,748.5 H23.5 V755 L16,754Z M24.5,748.5 H32 V756 L24.5,755.2Z" fill="#fff"/>
<circle cx="75" cy="748" r="12" fill="#0c7fd0"/>
<path d="M63,748 A12,12 0 0 1 87,748 C87,754 80,755 77,752 C82,748 78,741 71,742 C67,743 64,745 63,748Z" fill="#3fce8f"/>
<path d="M66,752 C66,745 76,744 76,750 C76,756 82,758 85,756 C80,762 68,761 66,752Z" fill="#0b5fb0"/>
<path d="M113,740 H122 L125,743 H134 V756 H113Z" fill="#f3c648"/><rect x="113" y="744" width="21" height="12" fill="#ffdf7d"/><rect x="119" y="750" width="9" height="7" fill="#2f8fd6"/>
<path d="M161,742 H183 V757 Q183,759 181,759 H163 Q161,759 161,757Z" fill="#f3f3f3"/><path d="M167,742 V738 Q172,734 177,738 V742" fill="none" stroke="#ddd" stroke-width="1.5"/><rect x="168" y="745" width="3.8" height="3.8" fill="#f25022"/><rect x="172.5" y="745" width="3.8" height="3.8" fill="#7fba00"/><rect x="168" y="749.5" width="3.8" height="3.8" fill="#00a4ef"/><rect x="172.5" y="749.5" width="3.8" height="3.8" fill="#ffb900"/>
<path d="M210,744 L222,737 L234,744 V759 H210Z" fill="#1a8fe0"/><path d="M210,744 L222,752 L234,744 V741 L222,737 L210,741Z" fill="#0f6cbd"/><path d="M210,746 L222,752 L234,746 L222,741Z" fill="#e8f4fc"/>
<path d="M259,738 H283 V753 L276,760 H259Z" fill="#15a6e0"/><path d="M277,744 H270 Q265,744 265,749 Q265,754 270,754 H277" fill="none" stroke="#fff" stroke-width="3"/>
<path d="M309,749 L320,738 L320,760Z" fill="#111"/><path d="M320,737 L332,749 L320,760Z" fill="#5e9fdc"/><path d="M321,741 L316,749 H320 L317,757 L325,746 H321Z" fill="#d6e8f8"/>
<rect x="357" y="736" width="24" height="24" rx="4" fill="#111"/><path d="M369,740 L378,755 H360Z M369,745 L374,753 H364Z" fill="none" stroke="#ddd" stroke-width="1.1"/>
<circle cx="418" cy="748" r="11.5" fill="#e6453a"/><path d="M418,748 L428,748 A11.5,11.5 0 0 1 412.3,758 Z" fill="#fbc116"/><path d="M418,748 L412.3,758 A11.5,11.5 0 0 1 408,742.3Z" fill="#34a853"/><circle cx="418" cy="748" r="5" fill="#4a8af4" stroke="#fff" stroke-width="1.5"/>
<rect x="455" y="736" width="24" height="24" fill="#fdeedd"/><path d="M460,756 V741 H474 V745 H465 V748 H472 V752 H465 V756Z" fill="#e88a2c"/>
<circle cx="980" cy="748" r="9" fill="url(#sun)"/>
<g fill="#fff" font-size="14">
<text x="1000" y="754">33°C</text>
<text x="1038" y="754">Sunny</text>
<text x="1213" y="752" font-size="12">ENG</text>
<text x="1278" y="743" font-size="12" text-anchor="middle">15:29</text>
<text x="1277.5" y="761" font-size="12" text-anchor="middle">17/08/2021</text>
</g>
<path d="M1093,751 L1099,745 L1105,751" fill="none" stroke="#fff" stroke-width="1.2"/>
<g fill="none" stroke="#fff" stroke-width="1">
<rect x="1118.5" y="745" width="7" height="7" rx="1"/><path d="M1125.5,747 L1129,745.5 V751.5 L1125.5,750"/><path d="M1119,741.5 Q1122,739.5 1125,741.5 M1119,755.5 Q1122,757.5 1125,755.5"/>
<rect x="1141" y="745" width="14" height="8"/><path d="M1138,744 V748 M1136,746 H1140"/>
<path d="M1167,755 A10,10 0 0 1 1177,743 M1170,755 A7,7 0 0 1 1177,747 M1173,755 A4,4 0 0 1 1177,751" opacity=".85"/>
<path d="M1188,746 H1191 L1195,742.5 V754.5 L1191,751 H1188Z M1197.5,745.5 A4,4 0 0 1 1197.5,751.5 M1200,743.5 A7,7 0 0 1 1200,753.5"/>
</g>
<rect x="1142.5" y="746.5" width="10" height="5" fill="#fff"/>
<circle cx="1176.5" cy="754" r="1.2" fill="#fff"/>
<path d="M1325,741 H1341 V752 H1332 L1329,755 V752 H1325Z" fill="#fff"/>
<circle cx="1340.7" cy="755.7" r="7.8" fill="#3c3c3c" stroke="#bbb" stroke-width="1"/>
<text x="1340.7" y="760" font-size="11" font-weight="bold" fill="#fff" text-anchor="middle">2</text>
</svg>
</body>
</html>
